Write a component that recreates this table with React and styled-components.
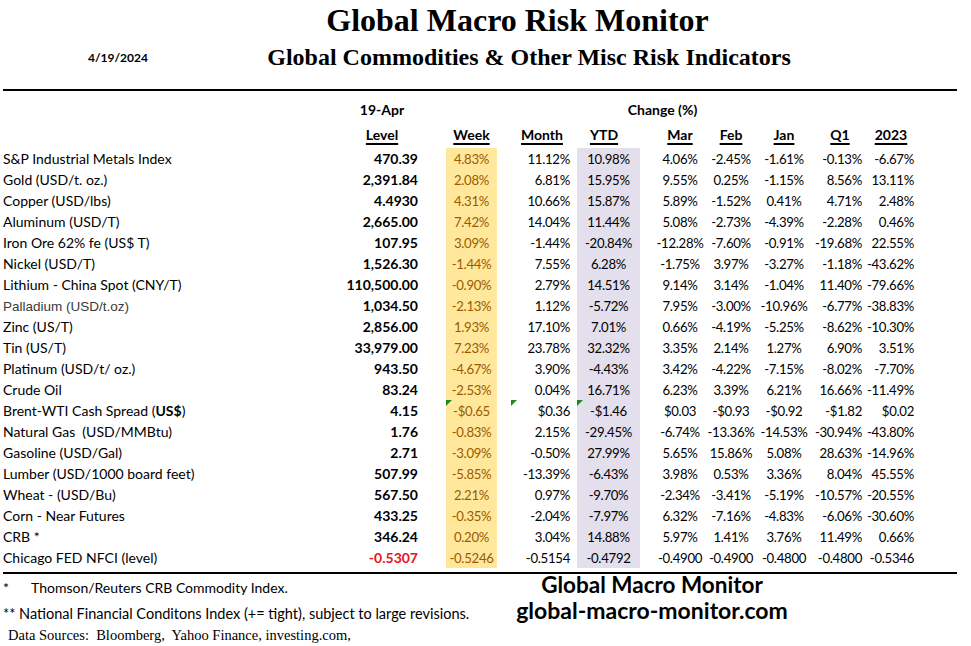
import React from "react"
import styled, { createGlobalStyle } from "styled-components"

const GlobalStyle = createGlobalStyle`
  body {
    margin: 0;
    background: #fff;
    color: #000;
  }
`

const GRID = "340px 84px 22px 51px 80px 63px 14px 52px 50px 56px 56px 52px"
const SANS = "Lato, 'Open Sans', sans-serif"
const SERIF = "'Liberation Serif', 'Times New Roman', serif"

const Page = styled.div`
  width: 971px;
  height: 646px;
  overflow: hidden;
  font-family: ${SANS};
`

const Title = styled.h1`
  margin: 0;
  padding: 3px 0 0 64px;
  height: 36px;
  line-height: 34px;
  text-align: center;
  font-family: ${SERIF};
  font-size: 32px;
  font-weight: 700;
`

const SubRow = styled.div`
  display: grid;
  grid-template-columns: 200px 658px;
  align-items: center;
  height: 37px;
`

const DateLabel = styled.div`
  padding-left: 88px;
  font-size: 12px;
  font-weight: 700;
`

const Subtitle = styled.h2`
  margin: 0;
  text-align: center;
  font-family: ${SERIF};
  font-size: 24px;
  font-weight: 700;
`

const Rule = styled.hr`
  margin: ${(p) => p.$top || 0}px 0 0 3px;
  width: 954px;
  height: 2px;
  border: 0;
  background: #000;
`

const Row = styled.div`
  display: grid;
  grid-template-columns: ${GRID};
  height: ${(p) => p.$h}px;
  align-items: end;
  font-size: 14px;
`

const Cell = styled.div`
  position: relative;
  height: 100%;
  display: flex;
  align-items: flex-end;
  justify-content: ${(p) => p.$justify || "center"};
  padding: 0 ${(p) => p.$pr || 0}px 2px ${(p) => p.$pl || 0}px;
  box-sizing: border-box;
  white-space: pre;
  background: ${(p) => p.$bg || "transparent"};
  color: ${(p) => p.$color || "#000"};
  font-weight: ${(p) => (p.$bold ? 700 : 400)};
  font-family: ${(p) => p.$font || SANS};
  font-size: ${(p) => p.$size || 13.2}px;
  letter-spacing: ${(p) => (p.$size ? 0 : -0.3)}px;

  ${(p) =>
    p.$flag !== undefined &&
    `
    &::before {
      content: "";
      position: absolute;
      top: 0;
      left: ${p.$flag}px;
      border-top: 6px solid #1e8a1e;
      border-right: 6px solid transparent;
    }
  `}
`

const GroupLabel = styled(Cell)`
  font-weight: 700;
  font-size: 14px;
  letter-spacing: 0;
  padding-bottom: 3px;
`

const HeadLabel = styled(Cell)`
  font-weight: 700;
  font-size: 14px;
  letter-spacing: 0;
  text-decoration: underline;
  text-decoration-thickness: 1.5px;
  text-underline-offset: 3px;
  padding-bottom: 5px;
`

const Footer = styled.div`
  display: grid;
  grid-template-columns: 500px 304px;
`

const Notes = styled.div`
  padding-left: 3px;
`

const Note = styled.div`
  height: ${(p) => p.$h}px;
  line-height: ${(p) => p.$h}px;
  white-space: pre;
  font-family: ${(p) => p.$font || SANS};
  font-size: ${(p) => p.$size || 14.5}px;
  padding-left: ${(p) => p.$indent || 0}px;
`

const Star = styled.span`
  display: inline-block;
  width: 28px;
`

const Brand = styled.div`
  text-align: center;
  font-weight: 700;
`

const BrandLine = styled.div`
  height: ${(p) => p.$h}px;
  line-height: ${(p) => p.$h}px;
  font-size: ${(p) => p.$size}px;
`

const YELLOW = "#ffe89b"
const PURPLE = "#e4dfec"
const GOLD_TEXT = "#9c5a00"

const rows = [
  ["S&P Industrial Metals Index", "470.39", "4.83%", "11.12%", "10.98%", "4.06%", "-2.45%", "-1.61%", "-0.13%", "-6.67%"],
  ["Gold (USD/t. oz.)", "2,391.84", "2.08%", "6.81%", "15.95%", "9.55%", "0.25%", "-1.15%", "8.56%", "13.11%"],
  ["Copper (USD/lbs)", "4.4930", "4.31%", "10.66%", "15.87%", "5.89%", "-1.52%", "0.41%", "4.71%", "2.48%"],
  ["Aluminum (USD/T)", "2,665.00", "7.42%", "14.04%", "11.44%", "5.08%", "-2.73%", "-4.39%", "-2.28%", "0.46%"],
  ["Iron Ore 62% fe (US$ T)", "107.95", "3.09%", "-1.44%", "-20.84%", "-12.28%", "-7.60%", "-0.91%", "-19.68%", "22.55%"],
  ["Nickel (USD/T)", "1,526.30", "-1.44%", "7.55%", "6.28%", "-1.75%", "3.97%", "-3.27%", "-1.18%", "-43.62%"],
  ["Lithium - China Spot (CNY/T)", "110,500.00", "-0.90%", "2.79%", "14.51%", "9.14%", "3.14%", "-1.04%", "11.40%", "-79.66%"],
  ["Palladium (USD/t.oz)", "1,034.50", "-2.13%", "1.12%", "-5.72%", "7.95%", "-3.00%", "-10.96%", "-6.77%", "-38.83%"],
  ["Zinc (US/T)", "2,856.00", "1.93%", "17.10%", "7.01%", "0.66%", "-4.19%", "-5.25%", "-8.62%", "-10.30%"],
  ["Tin (US/T)", "33,979.00", "7.23%", "23.78%", "32.32%", "3.35%", "2.14%", "1.27%", "6.90%", "3.51%"],
  ["Platinum (USD/t/ oz.)", "943.50", "-4.67%", "3.90%", "-4.43%", "3.42%", "-4.22%", "-7.15%", "-8.02%", "-7.70%"],
  ["Crude Oil", "83.24", "-2.53%", "0.04%", "16.71%", "6.23%", "3.39%", "6.21%", "16.66%", "-11.49%"],
  ["Brent-WTI Cash Spread (US$)", "4.15", "-$0.65", "$0.36", "-$1.46", "$0.03", "-$0.93", "-$0.92", "-$1.82", "$0.02"],
  ["Natural Gas  (USD/MMBtu)", "1.76", "-0.83%", "2.15%", "-29.45%", "-6.74%", "-13.36%", "-14.53%", "-30.94%", "-43.80%"],
  ["Gasoline (USD/Gal)", "2.71", "-3.09%", "-0.50%", "27.99%", "5.65%", "15.86%", "5.08%", "28.63%", "-14.96%"],
  ["Lumber (USD/1000 board feet)", "507.99", "-5.85%", "-13.39%", "-6.43%", "3.98%", "0.53%", "3.36%", "8.04%", "45.55%"],
  ["Wheat - (USD/Bu)", "567.50", "2.21%", "0.97%", "-9.70%", "-2.34%", "-3.41%", "-5.19%", "-10.57%", "-20.55%"],
  ["Corn - Near Futures", "433.25", "-0.35%", "-2.04%", "-7.97%", "6.32%", "-7.16%", "-4.83%", "-6.06%", "-30.60%"],
  ["CRB *", "346.24", "0.20%", "3.04%", "14.88%", "5.97%", "1.41%", "3.76%", "11.49%", "0.66%"],
  ["Chicago FED NFCI (level)", "-0.5307", "-0.5246", "-0.5154", "-0.4792", "-0.4900", "-0.4900", "-0.4800", "-0.4800", "-0.5346"],
]

// right-hand month columns: [justify, padRight]
const tail = [
  ["center", 0],
  ["center", 0],
  ["center", 0],
  ["flex-end", 6],
  ["flex-end", 6],
]

const RowLabel = ({ text }) => {
  if (text.startsWith("Brent")) {
    return (
      <Cell $justify="flex-start" $pl={3} $size={14}>
        Brent-WTI Cash Spread (<b>US$</b>)
      </Cell>
    )
  }
  if (text.startsWith("Palladium")) {
    return (
      <Cell $justify="flex-start" $pl={3} $size={13.5} $color="#3a3a3a" $font="'Liberation Sans', Arial, sans-serif">
        {text}
      </Cell>
    )
  }
  return (
    <Cell $justify="flex-start" $pl={3} $size={14}>
      {text}
    </Cell>
  )
}

const DataRow = ({ row }) => {
  const [label, level, week, month, ytd, ...rest] = row
  const flagged = label.startsWith("Brent")
  const negLevel = level.startsWith("-")
  return (
    <Row $h={21}>
      <RowLabel text={label} />
      <Cell $justify="flex-end" $pr={6} $size={14} $bold $color={negLevel ? "#e8141b" : "#000"}>
        {level}
      </Cell>
      <Cell />
      <Cell $bg={YELLOW} $color={GOLD_TEXT} $flag={flagged ? 0 : undefined}>
        {week}
      </Cell>
      <Cell $justify="flex-end" $pr={7} $flag={flagged ? 14 : undefined}>
        {month}
      </Cell>
      <Cell $bg={PURPLE} $flag={flagged ? 0 : undefined}>
        {ytd}
      </Cell>
      <Cell />
      {rest.map((v, i) => (
        <Cell key={i} $justify={tail[i][0]} $pr={tail[i][1]}>
          {v}
        </Cell>
      ))}
    </Row>
  )
}

export default function App() {
  return (
    <Page>
      <GlobalStyle />
      <Title>Global Macro Risk Monitor</Title>
      <SubRow>
        <DateLabel>4/19/2024</DateLabel>
        <Subtitle>Global Commodities &amp; Other Misc Risk Indicators</Subtitle>
      </SubRow>
      <Rule $top={13} />

      <Row $h={30}>
        <Cell />
        <GroupLabel>19-Apr</GroupLabel>
        <Cell />
        <Cell />
        <GroupLabel style={{ gridColumn: "5 / 11" }} $pl={16}>
          Change (%)
        </GroupLabel>
      </Row>
      <Row $h={27}>
        <Cell />
        <HeadLabel>Level</HeadLabel>
        <Cell />
        <HeadLabel>Week</HeadLabel>
        <HeadLabel $pl={10}>Month</HeadLabel>
        <HeadLabel $pr={9}>YTD</HeadLabel>
        <Cell />
        <HeadLabel>Mar</HeadLabel>
        <HeadLabel>Feb</HeadLabel>
        <HeadLabel>Jan</HeadLabel>
        <HeadLabel>Q1</HeadLabel>
        <HeadLabel $pr={6}>2023</HeadLabel>
      </Row>

      {rows.map((r) => (
        <DataRow key={r[0]} row={r} />
      ))}

      <Rule $top={4} />

      <Footer>
        <Notes>
          <Note $h={27} $size={14}>
            <Star>*</Star>Thomson/Reuters CRB Commodity Index.
          </Note>
          <Note $h={26}>** National Financial Conditons Index (+= tight), subject to large revisions.</Note>
          <Note $h={16} $font={SERIF} $size={14.5} $indent={5}>
            Data Sources:  Bloomberg,  Yahoo Finance, investing.com,
          </Note>
        </Notes>
        <Brand>
          <BrandLine $h={22} $size={22.5}>
            Global Macro Monitor
          </BrandLine>
          <BrandLine $h={29} $size={23}>
            global-macro-monitor.com
          </BrandLine>
        </Brand>
      </Footer>
    </Page>
  )
}
